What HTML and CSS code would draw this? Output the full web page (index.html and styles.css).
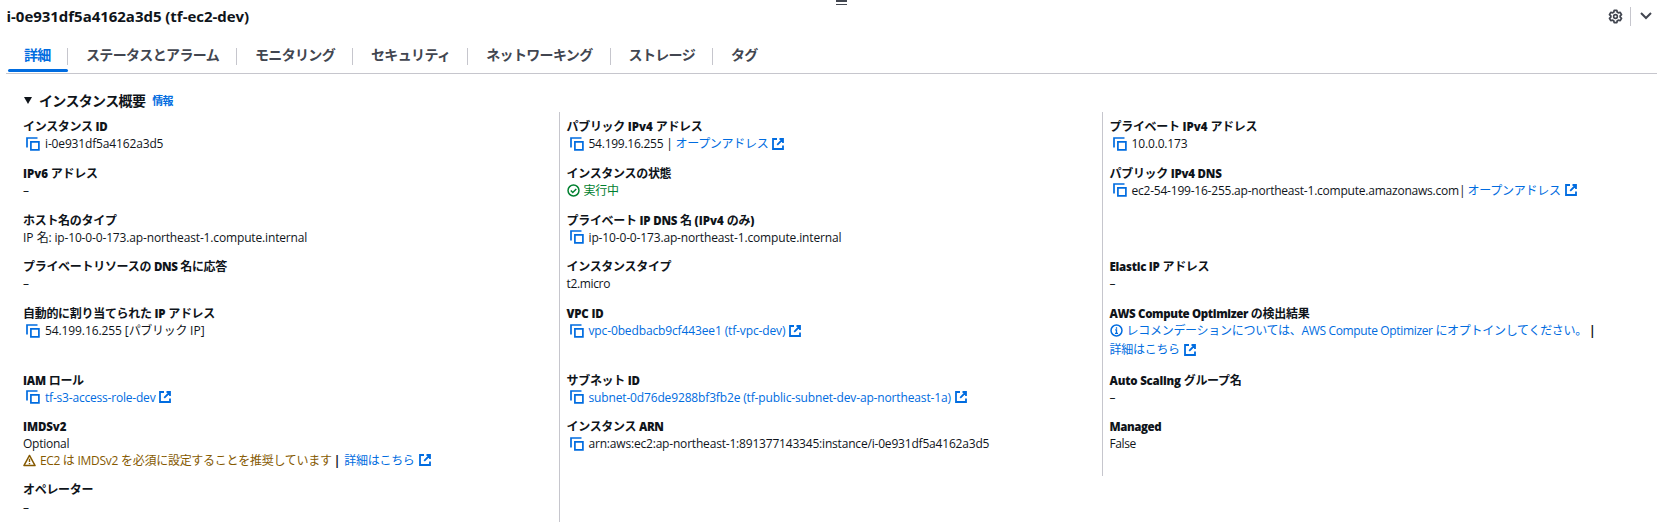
FILE: index.html
```html
<!DOCTYPE html>
<html lang="ja">
<head>
<meta charset="utf-8">
<title>i-0e931df5a4162a3d5 (tf-ec2-dev)</title>
<link rel="stylesheet" href="styles.css">
</head>
<body>
<svg class="defs" width="0" height="0" aria-hidden="true">
  <symbol id="copy" viewBox="0 0 14 14"><path d="M1 10.5V1h10.5M4.9 4.9h8v8h-8z" fill="none" stroke="currentColor" stroke-width="1.7"/></symbol>
  <symbol id="ext" viewBox="0 0 12 12"><path d="M5 1H1v10h10V7.5M7.5 1H11v4M11 1L5.2 6.8" fill="none" stroke="currentColor" stroke-width="1.8"/></symbol>
  <symbol id="ok" viewBox="0 0 14 14"><circle cx="7" cy="7" r="5.9" fill="none" stroke="currentColor" stroke-width="1.6"/><path d="M4.1 7.1l2.1 2.1 3.8-3.8" fill="none" stroke="currentColor" stroke-width="1.6"/></symbol>
  <symbol id="info" viewBox="0 0 14 14"><circle cx="7" cy="7" r="5.9" fill="none" stroke="currentColor" stroke-width="1.6"/><path d="M5.6 6.4H7V10M5.4 10h3.2M7 3.6v1.5" fill="none" stroke="currentColor" stroke-width="1.4"/></symbol>
  <symbol id="warn" viewBox="0 0 14 14"><path d="M7 1.6L13 12.4H1z" fill="none" stroke="currentColor" stroke-width="1.6" stroke-linejoin="round"/><path d="M7 5.2v3.4M7 9.6v1.5" fill="none" stroke="currentColor" stroke-width="1.5"/></symbol>
</svg>
<div class="panel">
  <div class="handle"><i></i><i></i></div>
  <header class="top">
    <h1>i-0e931df5a4162a3d5 (tf-ec2-dev)</h1>
    <div class="tools">
      <svg class="gear" viewBox="0 0 16 16"><path d="M6.6 1.5h2.8l.5 1.9 1.2.7 1.9-.5 1.4 2.4-1.4 1.4v1.2l1.4 1.4-1.4 2.4-1.9-.5-1.2.7-.5 1.9H6.6l-.5-1.9-1.2-.7-1.9.5L1.6 10l1.4-1.4V7.4L1.6 6 3 3.6l1.9.5 1.2-.7z" fill="none" stroke="currentColor" stroke-width="1.9" stroke-linejoin="round"/><circle cx="8" cy="8" r="2" fill="none" stroke="currentColor" stroke-width="1.7"/></svg>
      <span class="bar"></span>
      <svg class="chev" viewBox="0 0 12 8"><path d="M1 1l5 5 5-5" fill="none" stroke="currentColor" stroke-width="2"/></svg>
    </div>
  </header>
  <nav class="tabs">
    <a class="tab active">詳細</a>
    <a class="tab">ステータスとアラーム</a>
    <a class="tab">モニタリング</a>
    <a class="tab">セキュリティ</a>
    <a class="tab">ネットワーキング</a>
    <a class="tab">ストレージ</a>
    <a class="tab">タグ</a>
  </nav>
  <div class="section"><span class="tri"></span><h2>インスタンス概要</h2><a class="more">情報</a></div>

  <main class="grid">
    <dl class="col">
      <div class="item"><dt>インスタンス <b class="t40">ID</b></dt>
        <dd><svg class="copy"><use href="#copy"/></svg><span class="t15">i-0e931df5a4162a3d5</span></dd></div>
      <div class="item"><dt><b>IPv6</b> アドレス</dt><dd>–</dd></div>
      <div class="item"><dt>ホスト名のタイプ</dt><dd><span>IP </span><span class="jp">名</span><span class="t15">: ip-10-0-0-173.ap-northeast-1.compute.internal</span></dd></div>
      <div class="item"><dt>プライベートリソースの <b class="t40">DNS</b> 名に応答</dt><dd>–</dd></div>
      <div class="item tall"><dt>自動的に割り当てられた <b class="t20">IP</b> アドレス</dt>
        <dd><svg class="copy"><use href="#copy"/></svg><span class="t10">54.199.16.255 [</span><span class="jp">パブリック </span><span>IP]</span></dd></div>
      <div class="item"><dt><b class="t20">IAM</b> ロール</dt>
        <dd class="link"><svg class="copy"><use href="#copy"/></svg><span class="t20">tf-s3-access-role-dev</span><svg class="ext"><use href="#ext"/></svg></dd></div>
      <div class="item imds"><dt><b class="t10">IMDSv2</b></dt><dd><span class="t25">Optional</span></dd>
        <dd class="second"><span class="warn"><svg class="status"><use href="#warn"/></svg><span class="t35">EC2 </span><span class="jp">は </span><span class="t25">IMDSv2 </span><span class="jp">を必須に設定することを推奨しています</span></span><span class="pipe">|</span><span class="link"><span class="jp">詳細はこちら</span><svg class="ext"><use href="#ext"/></svg></span></dd></div>
      <div class="item"><dt>オペレーター</dt><dd class="low">–</dd></div>
    </dl>

    <dl class="col ruled">
      <div class="item"><dt>パブリック <b>IPv4</b> アドレス</dt>
        <dd><svg class="copy"><use href="#copy"/></svg><span class="t25">54.199.16.255 | </span><span class="link"><span class="jp">オープンアドレス</span><svg class="ext"><use href="#ext"/></svg></span></dd></div>
      <div class="item"><dt>インスタンスの状態</dt><dd class="good"><svg class="status"><use href="#ok"/></svg><span class="jp">実行中</span></dd></div>
      <div class="item"><dt>プライベート <b class="t20">IP DNS</b> 名 <b>(IPv4 </b>のみ<b>)</b></dt>
        <dd><svg class="copy"><use href="#copy"/></svg><span class="t15">ip-10-0-0-173.ap-northeast-1.compute.internal</span></dd></div>
      <div class="item"><dt>インスタンスタイプ</dt><dd><span class="t35">t2.micro</span></dd></div>
      <div class="item tall"><dt><b class="t20">VPC ID</b></dt>
        <dd class="link"><svg class="copy"><use href="#copy"/></svg><span class="t13">vpc-0bedbacb9cf443ee1 (tf-vpc-dev)</span><svg class="ext"><use href="#ext"/></svg></dd></div>
      <div class="item"><dt>サブネット <b class="t40">ID</b></dt>
        <dd class="link"><svg class="copy"><use href="#copy"/></svg><span class="t15">subnet-0d76de9288bf3fb2e (tf-public-subnet-dev-ap-northeast-1a)</span><svg class="ext"><use href="#ext"/></svg></dd></div>
      <div class="item"><dt>インスタンス <b class="t50">ARN</b></dt>
        <dd><svg class="copy"><use href="#copy"/></svg><span class="t18">arn:aws:ec2:ap-northeast-1:891377143345:instance/i-0e931df5a4162a3d5</span></dd></div>
    </dl>

    <dl class="col ruled last">
      <div class="item"><dt>プライベート <b>IPv4</b> アドレス</dt>
        <dd><svg class="copy"><use href="#copy"/></svg><span class="t15">10.0.0.173</span></dd></div>
      <div class="item"><dt>パブリック <b class="t25">IPv4 DNS</b></dt>
        <dd><svg class="copy"><use href="#copy"/></svg><span class="t22">ec2-54-199-16-255.ap-northeast-1.compute.amazonaws.com</span><span class="thin">|</span><span class="link"><span class="jp">オープンアドレス</span><svg class="ext"><use href="#ext"/></svg></span></dd></div>
      <div class="item"></div>
      <div class="item"><dt><b class="t25">Elastic IP</b> アドレス</dt><dd>–</dd></div>
      <div class="item tall"><dt><b class="t35">AWS Compute Optimizer</b> の検出結果</dt>
        <dd class="link"><svg class="status"><use href="#info"/></svg><span class="jp">レコメンデーションについては、</span><span class="t35">AWS Compute Optimizer </span><span class="jp">にオプトインしてください。</span><span class="pipe">|</span></dd>
        <dd class="link wrap"><span class="jp">詳細はこちら</span><svg class="ext"><use href="#ext"/></svg></dd></div>
      <div class="item"><dt><b class="t20">Auto Scaling</b> グループ名</dt><dd>–</dd></div>
      <div class="item"><dt><b class="t40">Managed</b></dt><dd><span class="t40">False</span></dd></div>
    </dl>
  </main>
</div>
</body>
</html>
```
FILE: styles.css
```css
* { box-sizing: border-box; }
body {
  margin: 0;
  background: #fff;
  color: #0f141a;
  font: 12px/17px "Open Sans", "Noto Sans CJK JP", sans-serif;
}
h1, h2, dl, dd { margin: 0; }
.defs { display: block; height: 0; }
.panel { height: 525px; overflow: hidden; }
svg { flex: none; }

.handle { height: 5px; width: 11px; margin-left: 836px; display: flex; flex-direction: column; justify-content: space-between; }
.handle i { height: 1.5px; background: #424650; }

.top { height: 27px; display: flex; justify-content: space-between; padding: 0 18px 0 6.5px; }
h1 { font-size: 15px; line-height: 22px; font-weight: 700; letter-spacing: -.03px; }
.tools { display: flex; align-items: center; height: 22px; color: #424650; }
.gear { width: 15px; height: 15px; }
.bar { width: 1px; height: 19px; background: #c6c6cd; margin: 0 9px 0 7px; }
.chev { width: 12px; height: 8px; }

.tabs { display: flex; height: 42px; margin: 0 13px 0 6px; border-bottom: 1px solid #c6c6cd; }
.tab {
  position: relative;
  height: 40px;
  padding: 0 18px 0 18px;
  color: #424650;
  font-size: 14px;
  font-weight: 700;
  letter-spacing: -.66px;
  line-height: 46px;
  white-space: nowrap;
}
.tab::after { content: ""; position: absolute; right: 0; top: 16px; width: 1px; height: 17px; background: #c6c6cd; }
.tab:last-child::after { display: none; }
.tab.active { color: #006ce0; width: 62px; }
.tab.active::before { content: ""; position: absolute; left: 2px; right: 0; bottom: 0; height: 3px; border-radius: 2px; background: #006ce0; }

.section { display: flex; align-items: center; height: 38px; padding: 15px 0 0 24px; }
.tri { border: 4.5px solid transparent; border-top: 7px solid #0f141a; border-bottom: 0; margin-right: 7px; }
h2 { font-size: 14px; line-height: 20px; font-weight: 700; letter-spacing: -.65px; }
.more { color: #006ce0; font-size: 11px; font-weight: 700; letter-spacing: -.8px; margin-left: 7px; }

.grid { display: grid; grid-template: 410px / 559px 543px 1fr; }
.col { padding: 6px 0 0 23px; }
.ruled { padding-left: 6.5px; border-left: 1px solid #c6c6cd; }
.last { height: 364px; }
.item { height: 46.8px; }
.item.tall { height: 66.4px; }
.item.imds { height: 62.5px; }
dt { font-weight: 700; letter-spacing: -.3px; height: 17px; white-space: pre; }
dt b { font-size: 11.5px; letter-spacing: 0; }
dd { display: flex; align-items: center; height: 17px; white-space: pre; }
dd.second { height: 16px; }
dd.wrap { height: 21px; }
dd.low { height: 20px; }
.jp { letter-spacing: -.28px; }
.link { color: #006ce0; }
dd > .link, .warn { display: flex; align-items: center; }
.good { color: #00802f; }
.warn { color: #855900; }
.pipe { color: #0f141a; font-weight: 700; margin: 0 4px 0 2px; }
.thin { margin-right: 2px; }
.copy { width: 14px; height: 14px; margin: 0 5px 0 3px; color: #006ce0; }
.status { width: 13px; height: 13px; margin-right: 4px; }
.ext { width: 12px; height: 12px; margin-left: 4px; }

.t10, dt .t10 { letter-spacing: -.1px; }
.t13 { letter-spacing: -.13px; }
.t15, dt .t15 { letter-spacing: -.15px; }
.t18 { letter-spacing: -.19px; }
.t20, dt .t20 { letter-spacing: -.2px; }
.t22 { letter-spacing: -.22px; }
.t25, dt .t25 { letter-spacing: -.25px; }
.t35, dt .t35 { letter-spacing: -.35px; }
.t40, dt .t40 { letter-spacing: -.4px; }
.t50, dt .t50 { letter-spacing: -.5px; }
```
